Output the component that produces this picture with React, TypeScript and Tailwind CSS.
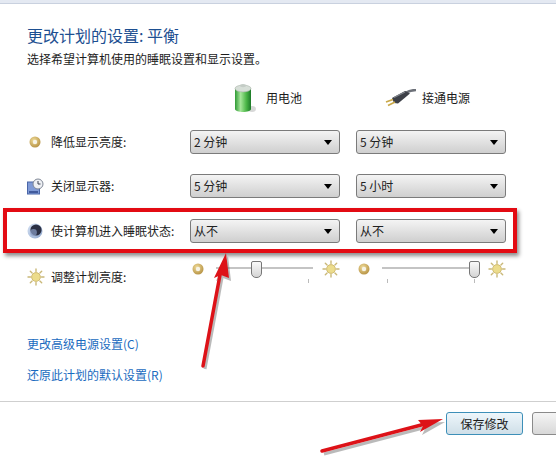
const font = "[font-family:'Noto_Sans_CJK_SC','Noto_Sans',sans-serif]";

function DimIcon() {
  return (
    <svg className="shrink-0" width="12" height="12" viewBox="0 0 12 12">
      <defs>
        <radialGradient id="ring" cx="40%" cy="35%" r="75%">
          <stop offset="0%" stopColor="#f0dc9a" />
          <stop offset="100%" stopColor="#b08a3a" />
        </radialGradient>
      </defs>
      <circle cx="6" cy="6" r="5.5" fill="url(#ring)" />
      <circle cx="6" cy="6" r="2.2" fill="#f6f3e6" />
    </svg>
  );
}

function SunIcon() {
  return (
    <svg className="shrink-0" width="18" height="18" viewBox="0 0 18 18">
      <g stroke="#c9b878" strokeWidth="1.4" strokeLinecap="round">
        <path d="M9 1v2.5M9 14.5V17M1 9h2.5M14.5 9H17M3.3 3.3l1.8 1.8M12.9 12.9l1.8 1.8M3.3 14.7l1.8-1.8M12.9 5.1l1.8-1.8" />
      </g>
      <circle cx="9" cy="9" r="4.4" fill="#ecdc8c" stroke="#c8b060" strokeWidth="0.8" />
    </svg>
  );
}

function ClockIcon() {
  return (
    <svg className="shrink-0" width="17" height="17" viewBox="0 0 17 17">
      <rect x="0.5" y="4" width="12" height="12" fill="#7f9ad6" stroke="#4a66a8" />
      <path d="M2 14h9" stroke="#2c4488" strokeWidth="1.5" />
      <circle cx="11" cy="6" r="5" fill="#eef0f4" stroke="#7f8796" />
      <path d="M11 3v3h2.500" fill="none" stroke="#3a4050" strokeWidth="1" />
    </svg>
  );
}

function MoonIcon() {
  return (
    <svg className="shrink-0" width="16" height="16" viewBox="0 0 16 16">
      <defs>
        <linearGradient id="moon" x1="0" y1="0" x2="1" y2="1">
          <stop offset="0%" stopColor="#d6e2f4" />
          <stop offset="100%" stopColor="#8ea6cc" />
        </linearGradient>
      </defs>
      <circle cx="8" cy="8" r="7.500" fill="url(#moon)" />
      <circle cx="9" cy="7" r="5.600" fill="#2b3044" />
      <circle cx="6.500" cy="9.500" r="3.400" fill="#8a9dc4" opacity="0.7" />
    </svg>
  );
}

function BatteryIcon() {
  return (
    <svg className="shrink-0" width="24" height="32" viewBox="0 0 24 32">
      <defs>
        <linearGradient id="bat" x1="0" y1="0" x2="1" y2="0">
          <stop offset="0%" stopColor="#2f9a35" />
          <stop offset="35%" stopColor="#a6e69a" />
          <stop offset="70%" stopColor="#4cb748" />
          <stop offset="100%" stopColor="#1c7a28" />
        </linearGradient>
      </defs>
      <ellipse cx="20" cy="27" rx="4" ry="3" fill="#d8d8d8" />
      <path d="M3 6.500h16V27c0 4-16 4-16 0z" fill="url(#bat)" />
      <ellipse cx="11" cy="6.500" rx="8" ry="3.400" fill="#d7dfd8" stroke="#a9b3aa" strokeWidth="0.6" />
      <ellipse cx="11" cy="3.600" rx="3" ry="1.600" fill="#c4ccc6" />
    </svg>
  );
}

function PlugIcon() {
  return (
    <svg className="shrink-0" width="32" height="18" viewBox="0 0 32 18">
      <path d="M20 4c4-2 7-3 11-3" fill="none" stroke="#6c7078" strokeWidth="2.500" />
      <path d="M7 9 20 2 25 4.500 13 14.500 9 14z" fill="#3d4048" />
      <path d="M9 8.500 20 3" stroke="#85898f" strokeWidth="1.200" />
      <path d="M8 10.500 1 13M10 13 3 16.500" stroke="#c9a848" strokeWidth="1.800" />
    </svg>
  );
}

function Select({ value }: { value: string }) {
  return (
    <div className="flex h-6 w-[150px] items-center justify-between rounded-[3px] border border-[#7b7b7b] bg-gradient-to-b from-[#f4f4f4] to-[#cfcfcf] pl-[3px] pr-[7px] text-[12px] text-[#222]">
      <span>{value}</span>
      <span className="h-0 w-0 border-x-[4px] border-t-[5px] border-x-transparent border-t-black" />
    </div>
  );
}

function Slider({ position, firstTick }: { position: string; firstTick?: boolean }) {
  return (
    <div className="flex w-[150px] items-start pl-[2px]">
      <DimIcon />
      <div className="relative ml-[12px] h-[20px] w-[97px] shrink-0">
        <div className="mt-[4px] h-[2px] w-full bg-[#c4c4c4]" />
        <div className={`absolute top-[-2px] h-[17px] w-[11px] rounded-b-[5px] rounded-t-[2px] border border-[#777] bg-gradient-to-b from-[#fafafa] to-[#d4d4d4] ${position}`} />
        {firstTick && <div className="absolute left-[5px] top-[16px] h-[4px] w-px bg-[#bbb]" />}
        <div className="absolute left-[92px] top-[16px] h-[4px] w-px bg-[#bbb]" />
      </div>
      <div className="ml-[9px] mt-[-3px]">
        <SunIcon />
      </div>
    </div>
  );
}

function Row({ icon, label, children, className = "" }: { icon: React.ReactNode; label: string; children: React.ReactNode; className?: string }) {
  return (
    <div className={`flex items-center ${className}`}>
      <div className="flex w-[24px] shrink-0">{icon}</div>
      <div className="w-[139px] shrink-0 whitespace-nowrap text-[12px] text-[#1c1c1c]">{label}</div>
      <div className="flex gap-4">{children}</div>
    </div>
  );
}

function Arrow({ d, head }: { d: string; head: string }) {
  return (
    <svg className="absolute left-0 top-0" width="556" height="458" viewBox="0 0 556 458">
      <g transform="translate(2 3)" opacity="0.4" fill="#555">
        <path d={d} stroke="#555" strokeWidth="3" />
        <path d={head} />
      </g>
      <path d={d} stroke="#dd1218" strokeWidth="3.500" strokeLinecap="round" fill="none" />
      <path d={head} fill="#dd1218" />
    </svg>
  );
}

export default function App() {
  return (
    <div className={`relative h-[458px] w-[556px] overflow-hidden bg-white ${font}`}>
      <div className="h-[4px] border-b border-[#c9d1df] bg-[#e4e9f2]" />

      <div className="pl-[27px]">
        <h1 className="mt-[20px] text-[16px] leading-[22px] text-[#1d4f91]">更改计划的设置: 平衡</h1>
        <p className="mt-[4px] text-[12px] leading-[18px] text-[#1c1c1c]">选择希望计算机使用的睡眠设置和显示设置。</p>

        <div className="mt-[14px] flex h-[32px] items-center pl-[163px]">
          <div className="flex w-[166px] items-center pl-[42px]">
            <BatteryIcon />
            <span className="ml-[10px] text-[12px] text-[#1c1c1c]">用电池</span>
          </div>
          <div className="flex items-center pl-[29px]">
            <PlugIcon />
            <span className="ml-[5px] text-[12px] text-[#1c1c1c]">接通电源</span>
          </div>
        </div>

        <Row className="mt-[16px]" icon={<div className="ml-[2px]"><DimIcon /></div>} label="降低显示亮度:">
          <Select value="2 分钟" />
          <Select value="5 分钟" />
        </Row>
        <Row className="mt-[20px]" icon={<ClockIcon />} label="关闭显示器:">
          <Select value="5 分钟" />
          <Select value="5 小时" />
        </Row>
        <Row className="mt-[21px]" icon={<MoonIcon />} label="使计算机进入睡眠状态:">
          <Select value="从不" />
          <Select value="从不" />
        </Row>
        <div className="mt-[20px] flex h-[23px] items-start">
          <div className="flex w-[24px] shrink-0 pt-[5px]">
            <SunIcon />
          </div>
          <div className="w-[139px] shrink-0 pt-[5px] text-[12px] leading-[18px] text-[#1c1c1c]">调整计划亮度:</div>
          <div className="flex gap-4">
            <Slider position="left-[35px]" />
            <Slider position="left-[87px]" firstTick />
          </div>
        </div>

        <div className="mt-[49px] text-[12px] leading-[18px] text-[#1a6bc0]">更改高级电源设置(C)</div>
        <div className="mt-[13px] text-[12px] leading-[18px] text-[#1a6bc0]">还原此计划的默认设置(R)</div>
      </div>

      <div className="mt-[17px] flex h-[57px] justify-end gap-[9px] border-t border-[#cfcfcf] pt-[10px]">
        <button className="h-[23px] w-[77px] rounded-[3px] border border-[#3d8fb8] bg-gradient-to-b from-[#eef6fb] to-[#cfdfe8] text-[12px] text-[#1c1c1c]">保存修改</button>
        <div className="mr-[-10px] h-[23px] w-[34px] rounded-[3px] border border-[#8a8a8a] bg-gradient-to-b from-[#f5f5f5] to-[#d8d8d8]" />
      </div>

      {/* annotation overlays */}
      <div className="absolute left-[3px] top-[208px] h-[45px] w-[514px] border-[4px] border-[#e30b13] shadow-[2px_3px_4px_rgba(0,0,0,0.45)]" />
      <Arrow d="M203 366 L220 275" head="M226 253 L229 278 L221 275 L214 278 Z" />
      <Arrow d="M322 451 L425 424" head="M443 419 L418 420 L423 426 L420 432 Z" />
    </div>
  );
}
